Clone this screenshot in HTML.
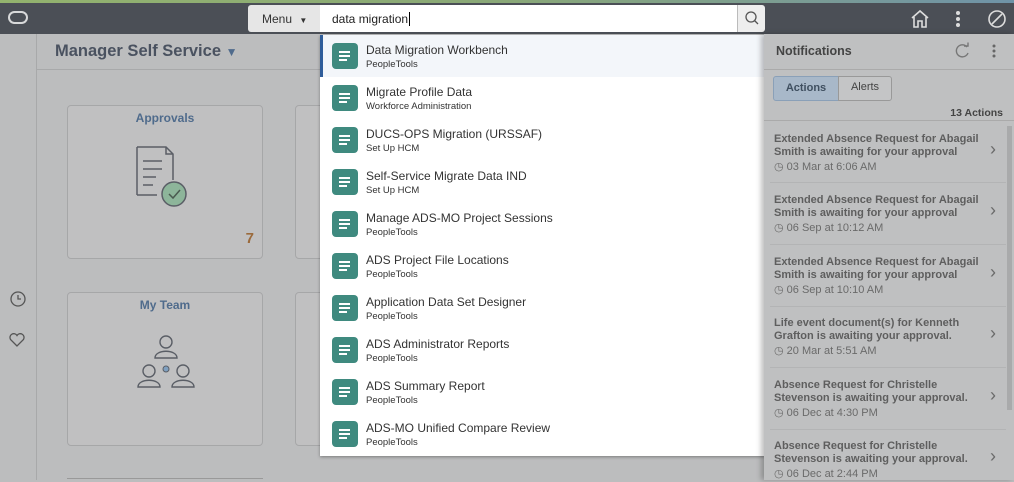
<!DOCTYPE html>
<html><head><meta charset="utf-8"><style>
*{box-sizing:border-box;margin:0;padding:0}
body{width:1014px;height:480px;overflow:hidden;background:#bcbdbe;font-family:"Liberation Sans",Arial,sans-serif;position:relative}
.abs{position:absolute}
.top{left:0;top:0;width:1014px;height:3px;background:linear-gradient(90deg,#93b36e,#8aa878 50%,#6f93a8)}
.hdr{left:0;top:3px;width:1014px;height:31px;background:#4b4f56}
.tile{position:absolute;width:196px;height:154px;border:1px solid #a6a7a8;border-radius:4px;background:#c0c0c1}
.tile .t{text-align:center;color:#4f6b8c;font-weight:bold;font-size:12px;margin-top:5px}
.dd{left:320px;top:35px;width:445px;height:421px;background:#fff;box-shadow:0 1px 3px rgba(0,0,0,.35)}
.it{position:absolute;left:0;width:445px;height:42px}
.it .ic{position:absolute;left:12px;top:8px;width:26px;height:26px;border-radius:4px;background:#3f8a7f}
.it .ic i{position:absolute;left:7px;height:2px;background:#fff}
.it .a{position:absolute;left:46px;top:8px;font-size:12px;color:#333}
.it .b{position:absolute;left:46px;top:24px;font-size:9.5px;color:#333}
.np{left:764px;top:34px;width:250px;height:446px;background:#bfc0c1;box-shadow:-3px 0 5px rgba(0,0,0,.25)}
.n{position:absolute;left:10px;width:205px;font-size:11px;font-weight:bold;color:#5e5e5e;line-height:13px}
.n .d{font-weight:normal;color:#6a6a6a;margin-top:2px;font-size:11px}
.n .ch{position:absolute;left:216px;top:10px;font-weight:normal;font-size:18px;color:#6a6a6a}
.sep{position:absolute;left:6px;width:236px;height:1px;background:#b3b4b5}
</style></head><body>
<div class="abs top"></div>
<div class="abs hdr">
 <div class="abs" style="left:8px;top:8px;width:20px;height:13px;border:2.5px solid #d8d9da;border-radius:7px"></div>
 <div class="abs" style="left:248px;top:2px;width:72px;height:27px;background:#e6e6e6;border-radius:3px 0 0 3px;font-size:12px;color:#333;padding:7px 0 0 14px">Menu <span style="font-size:8px;margin-left:4px">&#9660;</span></div>
 <div class="abs" style="left:320px;top:2px;width:417px;height:27px;background:#fff;font-size:12px;color:#222;padding:7px 0 0 12px">data migration<span style="border-left:1px solid #000;margin-left:1px"></span></div>
 <div class="abs" style="left:737px;top:2px;width:28px;height:27px;background:#eee;border-left:1px solid #bbb;border-radius:0 3px 3px 0">
  <svg width="28" height="27"><circle cx="13" cy="12" r="5" fill="none" stroke="#555" stroke-width="1.3"/><line x1="16.5" y1="15.5" x2="20" y2="19" stroke="#555" stroke-width="1.3"/></svg></div>
 <svg class="abs" style="left:908px;top:4px" width="24" height="24"><path d="M4 11 L12 4 L20 11 M6 10 V20 H10 V14 H14 V20 H18 V10" fill="none" stroke="#ddd" stroke-width="1.6"/></svg>
 <svg class="abs" style="left:950px;top:4px" width="16" height="24"><circle cx="8" cy="6" r="2" fill="#ddd"/><circle cx="8" cy="12" r="2" fill="#ddd"/><circle cx="8" cy="18" r="2" fill="#ddd"/></svg>
 <svg class="abs" style="left:985px;top:4px" width="24" height="24"><circle cx="12" cy="12" r="8" fill="none" stroke="#ddd" stroke-width="1.6"/><line x1="7" y1="17" x2="17" y2="7" stroke="#ddd" stroke-width="1.6"/></svg>
</div>
<div class="abs" style="left:36px;top:34px;width:1px;height:446px;background:#a8a9aa"></div>
<div class="abs" style="left:37px;top:69px;width:727px;height:1px;background:#a8a9aa"></div>
<div class="abs" style="left:55px;top:42px;font-size:16.5px;font-weight:bold;color:#4a5260">Manager Self Service <span style="font-size:12px;color:#4f6b8c">&#9660;</span></div>
<svg class="abs" style="left:8px;top:289px" width="20" height="20"><circle cx="10" cy="10" r="7" fill="none" stroke="#555" stroke-width="1.3"/><path d="M10 6 V10 H13" fill="none" stroke="#555" stroke-width="1.3"/></svg>
<svg class="abs" style="left:7px;top:330px" width="20" height="20"><path d="M10 16 L3.5 9.5 A3.5 3.5 0 0 1 10 5.5 A3.5 3.5 0 0 1 16.5 9.5 Z" fill="none" stroke="#555" stroke-width="1.3"/></svg>
<div class="tile" style="left:67px;top:105px"><div class="t">Approvals</div>
 <svg class="abs" style="left:65px;top:38px" width="70" height="70"><path d="M4 3 H33 L40 10 V36 M24 51 H4 Z" fill="none" stroke="#5a5e66" stroke-width="1.5"/><path d="M4 3 V51" stroke="#5a5e66" stroke-width="1.5"/><path d="M33 3 V10 H40" fill="none" stroke="#5a5e66" stroke-width="1.5"/><path d="M10 17H29M10 25H29M10 33H23M10 41H20" stroke="#5a5e66" stroke-width="1.5"/><circle cx="41" cy="50" r="13" fill="#c0c0c1"/><circle cx="41" cy="50" r="12" fill="#8db59a" stroke="#5a5e66" stroke-width="1.5"/><path d="M36 50 L40 54 L47 46" fill="none" stroke="#4a5a50" stroke-width="1.5"/></svg>
 <div class="abs" style="right:8px;top:124px;font-size:15px;font-weight:bold;color:#9b6a3c">7</div></div>
<div class="tile" style="left:295px;top:105px"></div>
<div class="tile" style="left:67px;top:292px"><div class="t">My Team</div>
 <svg class="abs" style="left:65px;top:40px" width="70" height="62"><g fill="none" stroke="#5a5e66" stroke-width="1.4"><circle cx="33" cy="9" r="6"/><path d="M22 25 C22 16 44 16 44 25 Z"/><circle cx="16" cy="38" r="6"/><path d="M5 54 C5 45 27 45 27 54 Z"/><circle cx="50" cy="38" r="6"/><path d="M39 54 C39 45 61 45 61 54 Z"/></g><circle cx="33" cy="36" r="3" fill="#7fa0c0" stroke="#5a5e66"/></svg></div>
<div class="tile" style="left:295px;top:292px"></div>
<div class="abs" style="left:67px;top:478px;width:196px;height:4px;border-top:1px solid #999"></div>
<div class="abs dd">
 <div class="it" style="top:0;background:#f3f6fa;border-left:3px solid #2f5d9a"><div class="ic" style="left:9px"><i style="top:8px;width:11px"></i><i style="top:12px;width:11px"></i><i style="top:16px;width:8px"></i></div><div class="a" style="left:43px">Data Migration Workbench</div><div class="b" style="left:43px">PeopleTools</div></div>
 <div class="it" style="top:42px"><div class="ic"><i style="top:8px;width:11px"></i><i style="top:12px;width:11px"></i><i style="top:16px;width:8px"></i></div><div class="a">Migrate Profile Data</div><div class="b">Workforce Administration</div></div>
 <div class="it" style="top:84px"><div class="ic"><i style="top:8px;width:11px"></i><i style="top:12px;width:11px"></i><i style="top:16px;width:8px"></i></div><div class="a">DUCS-OPS Migration (URSSAF)</div><div class="b">Set Up HCM</div></div>
 <div class="it" style="top:126px"><div class="ic"><i style="top:8px;width:11px"></i><i style="top:12px;width:11px"></i><i style="top:16px;width:8px"></i></div><div class="a">Self-Service Migrate Data IND</div><div class="b">Set Up HCM</div></div>
 <div class="it" style="top:168px"><div class="ic"><i style="top:8px;width:11px"></i><i style="top:12px;width:11px"></i><i style="top:16px;width:8px"></i></div><div class="a">Manage ADS-MO Project Sessions</div><div class="b">PeopleTools</div></div>
 <div class="it" style="top:210px"><div class="ic"><i style="top:8px;width:11px"></i><i style="top:12px;width:11px"></i><i style="top:16px;width:8px"></i></div><div class="a">ADS Project File Locations</div><div class="b">PeopleTools</div></div>
 <div class="it" style="top:252px"><div class="ic"><i style="top:8px;width:11px"></i><i style="top:12px;width:11px"></i><i style="top:16px;width:8px"></i></div><div class="a">Application Data Set Designer</div><div class="b">PeopleTools</div></div>
 <div class="it" style="top:294px"><div class="ic"><i style="top:8px;width:11px"></i><i style="top:12px;width:11px"></i><i style="top:16px;width:8px"></i></div><div class="a">ADS Administrator Reports</div><div class="b">PeopleTools</div></div>
 <div class="it" style="top:336px"><div class="ic"><i style="top:8px;width:11px"></i><i style="top:12px;width:11px"></i><i style="top:16px;width:8px"></i></div><div class="a">ADS Summary Report</div><div class="b">PeopleTools</div></div>
 <div class="it" style="top:378px"><div class="ic"><i style="top:8px;width:11px"></i><i style="top:12px;width:11px"></i><i style="top:16px;width:8px"></i></div><div class="a">ADS-MO Unified Compare Review</div><div class="b">PeopleTools</div></div>
</div>
<div class="abs np">
 <div class="abs" style="left:12px;top:10px;font-size:12.5px;font-weight:bold;color:#444">Notifications</div>
 <svg class="abs" style="left:189px;top:8px" width="18" height="18"><path d="M14 5 A6 6 0 1 0 15 11" fill="none" stroke="#777" stroke-width="1.4"/><path d="M11 4 H15 V0.5" fill="none" stroke="#777" stroke-width="1.4"/></svg>
 <svg class="abs" style="left:225px;top:8px" width="10" height="18"><circle cx="5" cy="4" r="1.5" fill="#666"/><circle cx="5" cy="9" r="1.5" fill="#666"/><circle cx="5" cy="14" r="1.5" fill="#666"/></svg>
 <div class="abs" style="left:0;top:35px;width:250px;height:1px;background:#aaa"></div>
 <div class="abs" style="left:9px;top:42px;width:66px;height:25px;background:#a8b8c9;border:1px solid #8aa0b8;border-radius:3px 0 0 3px;font-size:11px;font-weight:bold;color:#3f4f60;text-align:center;line-height:23px">Actions</div>
 <div class="abs" style="left:74px;top:42px;width:54px;height:25px;background:#c4c5c6;border:1px solid #999;border-radius:0 3px 3px 0;font-size:11px;color:#444;text-align:center;line-height:21px">Alerts</div>
 <div class="abs" style="right:11px;top:73px;font-size:10.5px;font-weight:bold;color:#444">13 Actions</div>
 <div class="abs" style="left:0;top:86px;width:250px;height:1px;background:#aaa"></div>
 <div class="abs" style="left:243px;top:92px;width:5px;height:284px;background:#a9aaab"></div>
 <div class="n" style="top:99px">Extended Absence Request for Abagail Smith is awaiting for your approval<div class="d">&#x25F7; 03 Mar at 6:06 AM</div><span class="ch">&#8250;</span></div>
 <div class="sep" style="top:148px"></div>
 <div class="n" style="top:160px">Extended Absence Request for Abagail Smith is awaiting for your approval<div class="d">&#x25F7; 06 Sep at 10:12 AM</div><span class="ch">&#8250;</span></div>
 <div class="sep" style="top:210px"></div>
 <div class="n" style="top:222px">Extended Absence Request for Abagail Smith is awaiting for your approval<div class="d">&#x25F7; 06 Sep at 10:10 AM</div><span class="ch">&#8250;</span></div>
 <div class="sep" style="top:272px"></div>
 <div class="n" style="top:283px">Life event document(s) for Kenneth Grafton is awaiting your approval.<div class="d">&#x25F7; 20 Mar at 5:51 AM</div><span class="ch">&#8250;</span></div>
 <div class="sep" style="top:333px"></div>
 <div class="n" style="top:345px">Absence Request for Christelle Stevenson is awaiting your approval.<div class="d">&#x25F7; 06 Dec at 4:30 PM</div><span class="ch">&#8250;</span></div>
 <div class="sep" style="top:395px"></div>
 <div class="n" style="top:406px">Absence Request for Christelle Stevenson is awaiting your approval.<div class="d">&#x25F7; 06 Dec at 2:44 PM</div><span class="ch">&#8250;</span></div>
</div>
</body></html>
